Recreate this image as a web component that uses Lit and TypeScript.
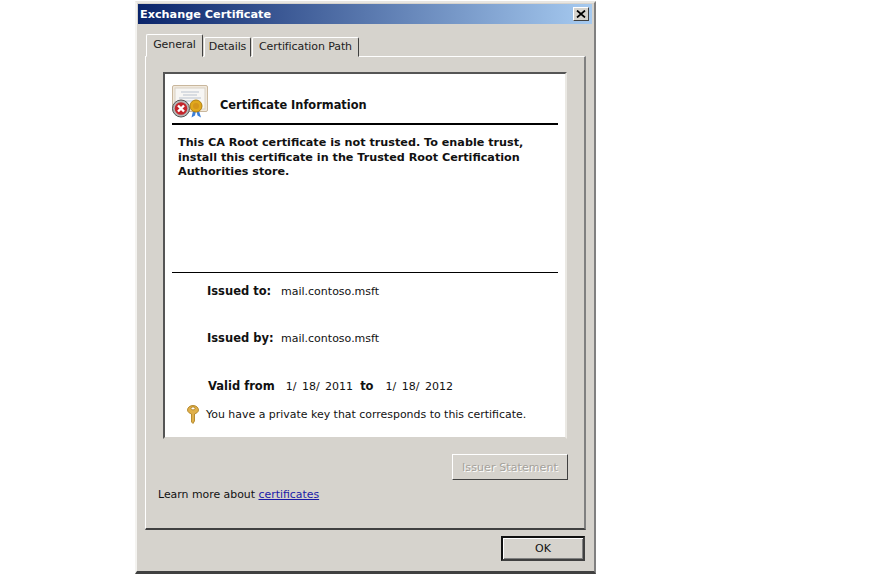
import { LitElement, html, css } from "lit";
import { customElement } from "lit/decorators.js";

@customElement("app-root")
export class AppRoot extends LitElement {
  static styles = css`
    :host { display: block; height: 574px; background: #fff; overflow: hidden; font-family: "DejaVu Sans", sans-serif; font-size: 11px; color: #111; }
    .stage { padding: 1px 0 0 135px; }
    .win { box-sizing: border-box; width: 461px; height: 573px; background: #d6d3cd; border-style: solid; border-width: 2px 2px 3px 2px; border-color: #e8e6e2 #808080 #404040 #f4f3f0; padding: 1px 2px 0 1px; display: flex; flex-direction: column; }
    .title { height: 20px; flex: none; background: linear-gradient(90deg, #0a246a, #a6caf0); color: #fff; font-weight: 700; font-size: 11.25px; display: flex; align-items: center; justify-content: space-between; padding: 0 3px 0 2px; }
    .close { box-sizing: border-box; width: 16px; height: 14px; background: #d6d3cd; border: 1px solid; border-color: #fff #404040 #404040 #fff; display: flex; align-items: center; justify-content: center; }
    .close svg { display: block; }
    .tabs { display: flex; align-items: flex-end; height: 33px; flex: none; padding-left: 8px; gap: 1px; box-sizing: border-box; position: relative; z-index: 1; margin-bottom: -1px; }
    .tab { box-sizing: border-box; height: 20px; padding-bottom: 1px; background: #d6d3cd; border: 1px solid; border-color: #fff #404040 #d6d3cd #fff; border-radius: 2px 2px 0 0; display: flex; align-items: center; justify-content: center; color: #222; letter-spacing: -0.1px; }
    .tab.g { width: 57px; height: 23px; padding-bottom: 2px; }
    .tab.d { width: 47px; }
    .tab.c { width: 107px; }
    .panel { box-sizing: border-box; width: 441px; height: 474px; margin-left: 7px; border: 1px solid; border-width: 1px 2px 2px 1px; border-color: #fff #808080 #404040 #fff; padding: 15px 17px 0 17px; flex: none; }
    .white { box-sizing: border-box; height: 367px; background: #fff; border: 1px solid; border-width: 2px; border-color: #555 #ebe9e4 #d6d3cd #555; padding: 0 7px; }
    .head { height: 51px; border-bottom: 2px solid #000; display: flex; align-items: flex-end; gap: 12px; padding-bottom: 2px; box-sizing: border-box; }
    .head svg { display: block; flex: none; margin-bottom: 3px; }
    .head b { font-size: 11.4px; line-height: 32px; color: #111; }
    .msg { height: 148px; border-bottom: 1px solid #000; box-sizing: border-box; padding: 11px 0 0 6px; font-weight: 700; line-height: 14.5px; font-size: 11.2px; }
    .rows { display: flex; flex-direction: column; padding-left: 35px; }
    .row { display: flex; align-items: center; height: 20px; }
    .row b { width: 74px; flex: none; font-size: 11.5px; }
    .r1 { margin-top: 8px; }
    .r2 { margin-top: 27px; }
    .r3 { margin-top: 28px; padding-left: 1px; }
    .dates b { width: auto; }
    .date { word-spacing: 2px; margin: 0 7px 0 11px; }
    .date.end { margin: 0 0 0 12px; }
    .keyrow { display: flex; align-items: center; gap: 7px; padding: 9px 0 0 15px; font-size: 10.95px; }
    .keyrow svg { display: block; flex: none; }
    .actions { display: flex; justify-content: flex-end; padding-top: 15px; margin-right: -1px; }
    .btn { box-sizing: border-box; background: #d6d3cd; border: 1px solid; border-color: #fff #404040 #404040 #fff; display: flex; align-items: center; justify-content: center; }
    .issuer { width: 116px; height: 26px; color: #a5a29b; text-shadow: 1px 1px 0 #fff; letter-spacing: 0.1px; }
    .learn { margin: 8px 0 0 -5px; font-size: 10.9px; }
    .learn a { color: #1a1aa8; text-decoration: underline; }
    .foot { display: flex; justify-content: flex-end; padding: 6px 7px 0 0; }
    .ok { width: 84px; height: 25px; border: 2px solid; border-color: #111 #404040 #404040 #111; box-shadow: inset 1px 1px 0 #fff, inset -1px -1px 0 #808080; }
  `;

  render() {
    return html`<div class="stage"><div class="win">
      <div class="title"><span>Exchange Certificate</span>
        <div class="close"><svg width="10" height="8" viewBox="0 0 10 8"><path d="M1 0.5 L9 7.5 M9 0.5 L1 7.5" stroke="#000" stroke-width="1.7" fill="none"/></svg></div>
      </div>
      <div class="tabs">
        <div class="tab g">General</div><div class="tab d">Details</div><div class="tab c">Certification Path</div>
      </div>
      <div class="panel">
        <div class="white">
          <div class="head">
            <svg width="36" height="33" viewBox="0 0 36 33">
              <rect x="0.5" y="0.5" width="35" height="26" rx="1.5" fill="#f1e9dc" stroke="#c9b79d"/>
              <rect x="3" y="3" width="30" height="21" fill="#f7f6f4" stroke="#d9d2c6"/>
              <path d="M9 7 H27 M11 10 H25 M7 13 H29 M13 16 H23" stroke="#b9c2cf" stroke-width="1"/>
              <circle cx="9" cy="23.5" r="8.5" fill="#b5b5b5" stroke="#555"/>
              <circle cx="9" cy="23.5" r="6.3" fill="#c4242a"/>
              <path d="M6 20.5 L12 26.5 M12 20.5 L6 26.5" stroke="#fff" stroke-width="2.4"/>
              <path d="M21 26 L19.5 32.5 L23 30.5 L24 26 Z M27 26 L29 32.5 L25.5 30.5 L24.5 26 Z" fill="#3b7fd9"/>
              <circle cx="24" cy="21" r="6" fill="#e0a81c" stroke="#b07f10"/>
              <circle cx="24" cy="21" r="3" fill="#d4951a"/>
            </svg>
            <b>Certificate Information</b>
          </div>
          <div class="msg">This CA Root certificate is not trusted. To enable trust,<br>install this certificate in the Trusted Root Certification<br>Authorities store.</div>
          <div class="rows">
            <div class="row r1"><b>Issued to:</b><span>mail.contoso.msft</span></div>
            <div class="row r2"><b>Issued by:</b><span>mail.contoso.msft</span></div>
            <div class="row r3 dates"><b>Valid from</b><span class="date">1/ 18/ 2011</span><b>to</b><span class="date end">1/ 18/ 2012</span></div>
          </div>
          <div class="keyrow">
            <svg width="12" height="19" viewBox="0 0 12 19">
              <path fill-rule="evenodd" d="M6 0.5 C9 0.5 11.5 2.5 11.5 5 C11.5 7 9.5 8.3 7.5 9 V16 L6 18.5 L4.5 17 V9 C2.5 8.3 0.5 7 0.5 5 C0.5 2.5 3 0.5 6 0.5 Z M4 3.4 a2 1.5 0 1 0 4 0 a2 1.5 0 1 0 -4 0 Z" fill="#e0b04a" stroke="#a87a18" stroke-width="0.8"/>
            </svg>
            <span>You have a private key that corresponds to this certificate.</span>
          </div>
        </div>
        <div class="actions"><div class="btn issuer">Issuer Statement</div></div>
        <div class="learn">Learn more about <a href="#">certificates</a></div>
      </div>
      <div class="foot"><div class="btn ok">OK</div></div>
    </div></div>`;
  }
}
